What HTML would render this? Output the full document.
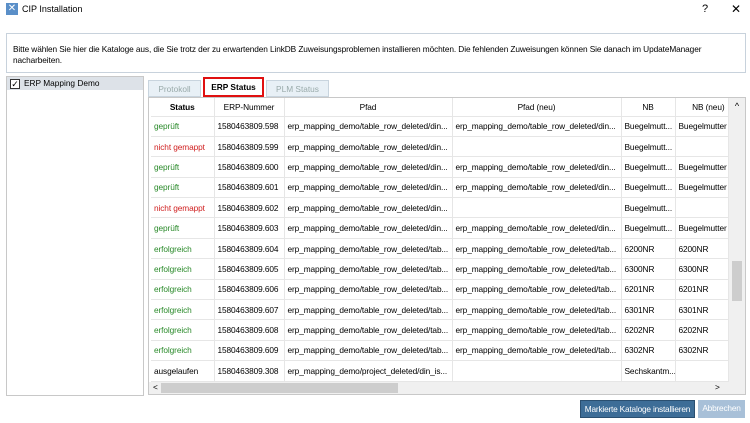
<!DOCTYPE html>
<html><head><meta charset="utf-8"><style>
*{box-sizing:border-box;margin:0;padding:0}
body{width:750px;height:423px;background:#fff;font-family:"Liberation Sans",sans-serif;font-size:8.3px;color:#000;position:relative;overflow:hidden}
.abs{position:absolute;white-space:nowrap}
table{border-collapse:collapse;table-layout:fixed}
td,th{height:20.4px;border-right:1px solid #e6e6e6;border-bottom:1px solid #e6e6e6;padding:0 3px;white-space:nowrap;overflow:hidden;font-weight:normal;text-align:left;letter-spacing:-0.1px}
th{height:18px;text-align:center;background:#fff}
.g{color:#2a8a2a}.r{color:#d02020}
</style></head><body>
<div class="abs" style="left:6px;top:3px;width:12px;height:12px;background:#5a8fc8;color:#fff;font-size:10px;line-height:12px;text-align:center">✕</div>
<div class="abs" style="left:22px;top:4px;font-size:9px">CIP Installation</div>
<div class="abs" style="left:702px;top:3px;font-size:11px">?</div>
<div class="abs" style="left:731px;top:2px;font-size:12px">✕</div>
<div class="abs" style="left:6px;top:33px;width:740px;height:40px;border:1px solid #c8d2dc"></div>
<div class="abs" style="left:13px;top:44px;width:730px;line-height:11px;white-space:normal;letter-spacing:-0.1px">Bitte wählen Sie hier die Kataloge aus, die Sie trotz der zu erwartenden LinkDB Zuweisungsproblemen installieren möchten. Die fehlenden Zuweisungen können Sie danach im UpdateManager nacharbeiten.</div>
<div class="abs" style="left:6px;top:76px;width:138px;height:320px;border:1px solid #c8c8c8"></div>
<div class="abs" style="left:7px;top:77px;width:136px;height:13px;background:#dde2e8"></div>
<div class="abs" style="left:10px;top:79px;width:10px;height:10px;border:1px solid #333;background:#fff;font-size:9px;line-height:8px;text-align:center">✓</div>
<div class="abs" style="left:24px;top:78px">ERP Mapping Demo</div>
<div class="abs" style="left:148px;top:80px;width:53px;height:17px;border:1px solid #c8d4de;background:#e8f0f6;color:#9aa;text-align:center;line-height:16px">Protokoll</div>
<div class="abs" style="left:203px;top:77px;width:61px;height:20px;border:2px solid #e01010;background:#fff;text-align:center;line-height:16px;font-weight:bold">ERP Status</div>
<div class="abs" style="left:266px;top:80px;width:63px;height:17px;border:1px solid #c8d4de;background:#e8f0f6;color:#9aa;text-align:center;line-height:16px">PLM Status</div>
<div class="abs" style="left:148px;top:97px;width:598px;height:298px;border:1px solid #c8c8c8;overflow:hidden">
<table class="abs" style="left:2px;top:0;width:577px">
<colgroup><col style="width:63px"><col style="width:70px"><col style="width:168px"><col style="width:169px"><col style="width:54px"><col style="width:53px"></colgroup>
<tr><th><b>Status</b></th><th>ERP-Nummer</th><th>Pfad</th><th>Pfad (neu)</th><th>NB</th><th style="text-align:right">NB (neu)</th></tr>
<tr><td class="g">geprüft</td><td>1580463809.598</td><td>erp_mapping_demo/table_row_deleted/din...</td><td>erp_mapping_demo/table_row_deleted/din...</td><td>Buegelmutt...</td><td>Buegelmutter</td></tr>
<tr><td class="r">nicht gemappt</td><td>1580463809.599</td><td>erp_mapping_demo/table_row_deleted/din...</td><td></td><td>Buegelmutt...</td><td></td></tr>
<tr><td class="g">geprüft</td><td>1580463809.600</td><td>erp_mapping_demo/table_row_deleted/din...</td><td>erp_mapping_demo/table_row_deleted/din...</td><td>Buegelmutt...</td><td>Buegelmutter</td></tr>
<tr><td class="g">geprüft</td><td>1580463809.601</td><td>erp_mapping_demo/table_row_deleted/din...</td><td>erp_mapping_demo/table_row_deleted/din...</td><td>Buegelmutt...</td><td>Buegelmutter</td></tr>
<tr><td class="r">nicht gemappt</td><td>1580463809.602</td><td>erp_mapping_demo/table_row_deleted/din...</td><td></td><td>Buegelmutt...</td><td></td></tr>
<tr><td class="g">geprüft</td><td>1580463809.603</td><td>erp_mapping_demo/table_row_deleted/din...</td><td>erp_mapping_demo/table_row_deleted/din...</td><td>Buegelmutt...</td><td>Buegelmutter</td></tr>
<tr><td class="g">erfolgreich</td><td>1580463809.604</td><td>erp_mapping_demo/table_row_deleted/tab...</td><td>erp_mapping_demo/table_row_deleted/tab...</td><td>6200NR</td><td>6200NR</td></tr>
<tr><td class="g">erfolgreich</td><td>1580463809.605</td><td>erp_mapping_demo/table_row_deleted/tab...</td><td>erp_mapping_demo/table_row_deleted/tab...</td><td>6300NR</td><td>6300NR</td></tr>
<tr><td class="g">erfolgreich</td><td>1580463809.606</td><td>erp_mapping_demo/table_row_deleted/tab...</td><td>erp_mapping_demo/table_row_deleted/tab...</td><td>6201NR</td><td>6201NR</td></tr>
<tr><td class="g">erfolgreich</td><td>1580463809.607</td><td>erp_mapping_demo/table_row_deleted/tab...</td><td>erp_mapping_demo/table_row_deleted/tab...</td><td>6301NR</td><td>6301NR</td></tr>
<tr><td class="g">erfolgreich</td><td>1580463809.608</td><td>erp_mapping_demo/table_row_deleted/tab...</td><td>erp_mapping_demo/table_row_deleted/tab...</td><td>6202NR</td><td>6202NR</td></tr>
<tr><td class="g">erfolgreich</td><td>1580463809.609</td><td>erp_mapping_demo/table_row_deleted/tab...</td><td>erp_mapping_demo/table_row_deleted/tab...</td><td>6302NR</td><td>6302NR</td></tr>
<tr><td>ausgelaufen</td><td>1580463809.308</td><td>erp_mapping_demo/project_deleted/din_is...</td><td></td><td>Sechskantm...</td><td></td></tr>
</table>
<div class="abs" style="left:580px;top:0;width:16px;height:296px;background:#f0f0f0"><div style="text-align:center;font-size:9px;margin-top:3px">^</div><div style="margin:150px 3px 0;height:40px;background:#cdcdcd"></div></div>
<div class="abs" style="left:0;top:284px;width:580px;height:12px;background:#f0f0f0"><span style="position:absolute;left:4px;top:0">&lt;</span><div class="abs" style="left:12px;top:1px;width:237px;height:10px;background:#cdcdcd"></div><span style="position:absolute;left:566px;top:0">&gt;</span></div>
</div>
<div class="abs" style="left:580px;top:400px;width:115px;height:18px;background:#3d6d97;border:1px solid #2a4f70;color:#fff;text-align:center;line-height:16px;letter-spacing:-0.2px">Markierte Kataloge installieren</div>
<div class="abs" style="left:698px;top:400px;width:47px;height:18px;background:#a8c0d8;color:#fff;text-align:center;line-height:17px;letter-spacing:-0.2px">Abbrechen</div>
</body></html>
